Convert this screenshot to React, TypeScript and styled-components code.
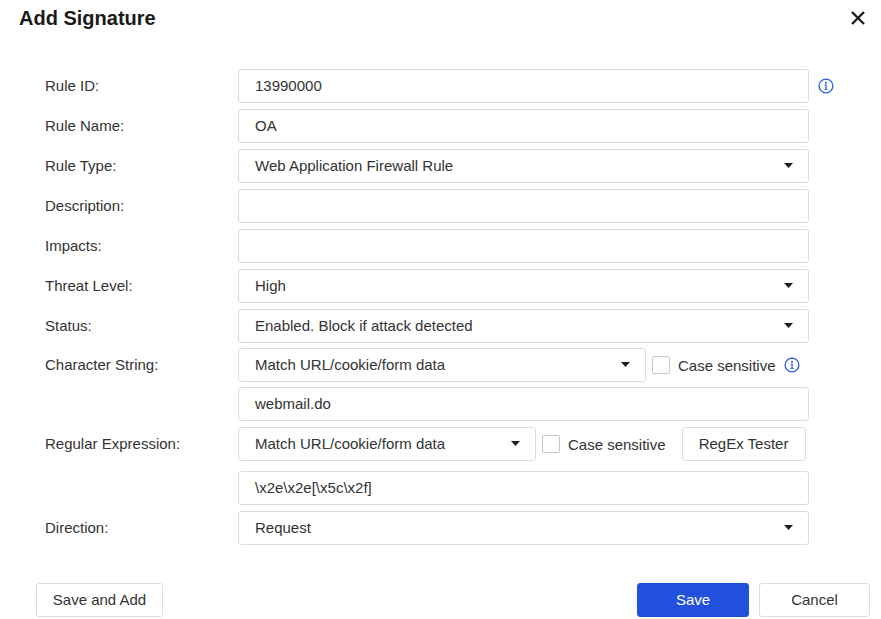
import styled, { createGlobalStyle } from "styled-components";

const GlobalStyle = createGlobalStyle`
  * { box-sizing: border-box; }
  body {
    margin: 0;
    background: #ffffff;
    font-family: "Liberation Sans", Arial, sans-serif;
    font-size: 15px;
    color: #333333;
  }
`;

const InfoIcon = () => (
  <svg width="16" height="16" viewBox="0 0 16 16" fill="none">
    <circle cx="8" cy="8" r="6.9" stroke="#2b5ce0" strokeWidth="1.3" />
    <circle cx="8" cy="4.7" r="1" fill="#2b5ce0" />
    <path d="M6.6 6.6h2.1v4.6h0.9v0.9H6.5v-0.9h0.9V7.5h-0.8z" fill="#2b5ce0" />
  </svg>
);

const Caret = () => (
  <svg width="9" height="5" viewBox="0 0 9 5">
    <path d="M0 0h9L4.5 5z" fill="#1f1f1f" />
  </svg>
);

const CloseIcon = () => (
  <svg width="14" height="14" viewBox="0 0 14 14">
    <path d="M1 1l12 12M13 1L1 13" stroke="#1a1a1a" strokeWidth="2.3" />
  </svg>
);

type Field = {
  label: string;
  value: string;
  kind: "input" | "select";
  info?: boolean;
  extra?: number;
};

const fields: Field[] = [
  { label: "Rule ID:", value: "13990000", kind: "input", info: true },
  { label: "Rule Name:", value: "OA", kind: "input" },
  { label: "Rule Type:", value: "Web Application Firewall Rule", kind: "select" },
  { label: "Description:", value: "", kind: "input" },
  { label: "Impacts:", value: "", kind: "input" },
  { label: "Threat Level:", value: "High", kind: "select" },
  { label: "Status:", value: "Enabled. Block if attack detected", kind: "select", extra: -1 },
];

const Control = ({ kind, value, width }: { kind: "input" | "select"; value: string; width?: number }) => (
  <Box $width={width}>
    <BoxText>{value}</BoxText>
    {kind === "select" && <Caret />}
  </Box>
);

export default function App() {
  return (
    <>
      <GlobalStyle />
      <Dialog>
        <Header>
          <Title>Add Signature</Title>
          <CloseButton>
            <CloseIcon />
          </CloseButton>
        </Header>
        <Form>
          {fields.map((f) => (
            <Row key={f.label} $extra={f.extra}>
              <Label>{f.label}</Label>
              <Control kind={f.kind} value={f.value} />
              {f.info && (
                <Side>
                  <InfoIcon />
                </Side>
              )}
            </Row>
          ))}
          <Row $extra={-1}>
            <Label>Character String:</Label>
            <Controls>
              <Control kind="select" value="Match URL/cookie/form data" width={408} />
              <Check />
              <CheckText>Case sensitive</CheckText>
              <InfoIcon />
            </Controls>
          </Row>
          <Row>
            <Label />
            <Control kind="input" value="webmail.do" />
          </Row>
          <Row $extra={4}>
            <Label>Regular Expression:</Label>
            <Controls>
              <Control kind="select" value="Match URL/cookie/form data" width={298} />
              <Check />
              <CheckText>Case sensitive</CheckText>
              <TesterButton>RegEx Tester</TesterButton>
            </Controls>
          </Row>
          <Row>
            <Label />
            <Control kind="input" value="\x2e\x2e[\x5c\x2f]" />
          </Row>
          <Row>
            <Label>Direction:</Label>
            <Control kind="select" value="Request" />
          </Row>
        </Form>
        <Footer>
          <Button $width={127}>Save and Add</Button>
          <FooterRight>
            <Button $primary $width={112}>Save</Button>
            <Button $width={111}>Cancel</Button>
          </FooterRight>
        </Footer>
      </Dialog>
    </>
  );
}

const Dialog = styled.div`
  width: 881px;
  height: 619px;
  display: flex;
  flex-direction: column;
`;

const Header = styled.div`
  height: 36px;
  display: flex;
  align-items: center;
  justify-content: space-between;
  padding: 0 16px 0 19px;
`;

const Title = styled.h1`
  margin: 0;
  font-size: 20px;
  font-weight: bold;
  color: #1a1a1a;
`;

const CloseButton = styled.div`
  width: 14px;
  height: 14px;
  display: flex;
  margin-top: -1px;
`;

const Form = styled.div`
  margin-top: 33px;
  padding-left: 45px;
  display: flex;
  flex-direction: column;
  gap: 6px;
`;

const Row = styled.div<{ $extra?: number }>`
  display: flex;
  align-items: center;
  height: 34px;
  margin-bottom: ${({ $extra }) => $extra ?? 0}px;
`;

const Label = styled.div`
  width: 193px;
  flex-shrink: 0;
  color: #333333;
  padding-bottom: 2px;
`;

const Box = styled.div<{ $width?: number }>`
  width: ${({ $width }) => $width ?? 571}px;
  height: 34px;
  flex-shrink: 0;
  border: 1px solid #dcdcdc;
  border-radius: 3px;
  background: #ffffff;
  display: flex;
  align-items: center;
  justify-content: space-between;
  padding: 0 15px 1px 16px;
  color: #333333;
`;

const BoxText = styled.span`
  white-space: nowrap;
`;

const Side = styled.div`
  margin-left: 9px;
  display: flex;
`;

const Controls = styled.div`
  display: flex;
  align-items: center;
  width: 571px;
`;

const Check = styled.div`
  width: 18px;
  height: 18px;
  margin-left: 6px;
  border: 1px solid #c6c6c6;
  border-radius: 2px;
  background: #ffffff;
  flex-shrink: 0;
`;

const CheckText = styled.span`
  margin: 0 8px 0 8px;
  white-space: nowrap;
  color: #333333;
`;

const TesterButton = styled.div`
  margin-left: 8px;
  width: 124px;
  height: 34px;
  border: 1px solid #dcdcdc;
  border-radius: 3px;
  display: flex;
  align-items: center;
  justify-content: center;
  padding-bottom: 2px;
  color: #333333;
`;

const Footer = styled.div`
  margin-top: 38px;
  display: flex;
  justify-content: space-between;
  padding: 0 11px 0 36px;
`;

const FooterRight = styled.div`
  display: flex;
  gap: 10px;
`;

const Button = styled.div<{ $primary?: boolean; $width?: number }>`
  width: ${({ $width }) => ($width ? `${$width}px` : "auto")};
  height: 34px;
  border-radius: 3px;
  display: flex;
  align-items: center;
  justify-content: center;
  padding-bottom: 2px;
  border: 1px solid ${({ $primary }) => ($primary ? "#2150dc" : "#dcdcdc")};
  background: ${({ $primary }) => ($primary ? "#2150dc" : "#ffffff")};
  color: ${({ $primary }) => ($primary ? "#ffffff" : "#333333")};
`;
